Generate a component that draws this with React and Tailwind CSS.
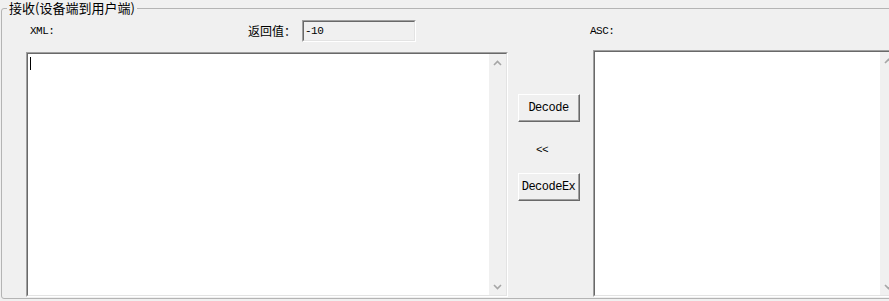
import React from "react";

function Chevron({ dir }) {
  return (
    <svg width="9" height="6" viewBox="0 0 9 6">
      <polyline
        points={dir === "up" ? "1,5 4.5,1.5 8,5" : "1,1 4.5,4.5 8,1"}
        fill="none"
        stroke="#a6a6a6"
        strokeWidth="1.6"
      />
    </svg>
  );
}

function Scrollbar() {
  return (
    <div className="w-[17px] h-full bg-[#f0f0f0] flex flex-col justify-between">
      <div className="h-[17px] flex items-center justify-center">
        <Chevron dir="up" />
      </div>
      <div className="h-[17px] flex items-center justify-center">
        <Chevron dir="down" />
      </div>
    </div>
  );
}

function Sunken({ className, innerClass, children }) {
  return (
    <div
      className={
        "border-t border-l border-t-[#a0a0a0] border-l-[#a0a0a0] border-r border-b border-r-white border-b-white " +
        className
      }
    >
      <div
        className={
          "h-full w-full border-t border-l border-t-[#696969] border-l-[#696969] border-r border-b border-r-[#e3e3e3] border-b-[#e3e3e3] " +
          innerClass
        }
      >
        {children}
      </div>
    </div>
  );
}

function Button({ children }) {
  return (
    <div className="w-[62px] h-[28px] border-t border-l border-t-white border-l-white border-r border-b border-r-[#696969] border-b-[#696969] bg-[#f0f0f0]">
      <div className="h-full w-full border-r border-b border-r-[#a0a0a0] border-b-[#a0a0a0] flex items-center justify-center text-[12px] tracking-[-0.5px] text-black">
        {children}
      </div>
    </div>
  );
}

export default function App() {
  return (
    <div className="w-[889px] h-[301px] overflow-hidden bg-[#f0f0f0] font-[family-name:Liberation_Mono,monospace] text-black">
      <fieldset className="ml-[1px] w-[920px] h-[299px] border border-[#b4b4b4] rounded-[3px] p-0 m-0">
        <legend className="ml-[5px] px-[2px] text-[13px] leading-[16px] font-[family-name:Noto_Sans_CJK_SC,sans-serif] text-black">
          接收(设备端到用户端)
        </legend>
        <div className="flex items-center h-[22px] mt-[4px] text-[11px] tracking-[-0.5px]">
          <span className="ml-[28px] w-[218px] leading-[22px]">XML:</span>
          <span className="w-[54px] font-[family-name:Noto_Sans_CJK_SC,sans-serif] text-[12px] tracking-normal leading-[22px]">
            返回值：
          </span>
          <Sunken className="w-[114px] h-[22px]" innerClass="bg-[#f0f0f0] flex items-center pl-[1px]">
            <span className="text-[11px] tracking-[-0.5px] leading-none">-10</span>
          </Sunken>
          <span className="ml-[174px] leading-[22px]">ASC:</span>
        </div>
        <div className="flex mt-[8px] h-[247px]">
          <Sunken className="ml-[24px] mt-[2px] w-[482px] h-[245px]" innerClass="flex">
            <div className="flex-1 h-full bg-white pl-[2px] pt-[3px]">
              <div className="w-[1px] h-[13px] bg-black" />
            </div>
            <Scrollbar />
          </Sunken>
          <div className="w-[85px] flex flex-col pl-[10px] pt-[44px]">
            <Button>Decode</Button>
            <div className="h-[51px] pt-[22px] pl-[18px] text-[11px] leading-[12px] tracking-[-0.5px]">
              &lt;&lt;
            </div>
            <Button>DecodeEx</Button>
          </div>
          <Sunken className="w-[306px] h-[247px]" innerClass="flex">
            <div className="flex-1 h-full bg-white" />
            <Scrollbar />
          </Sunken>
        </div>
      </fieldset>
    </div>
  );
}
